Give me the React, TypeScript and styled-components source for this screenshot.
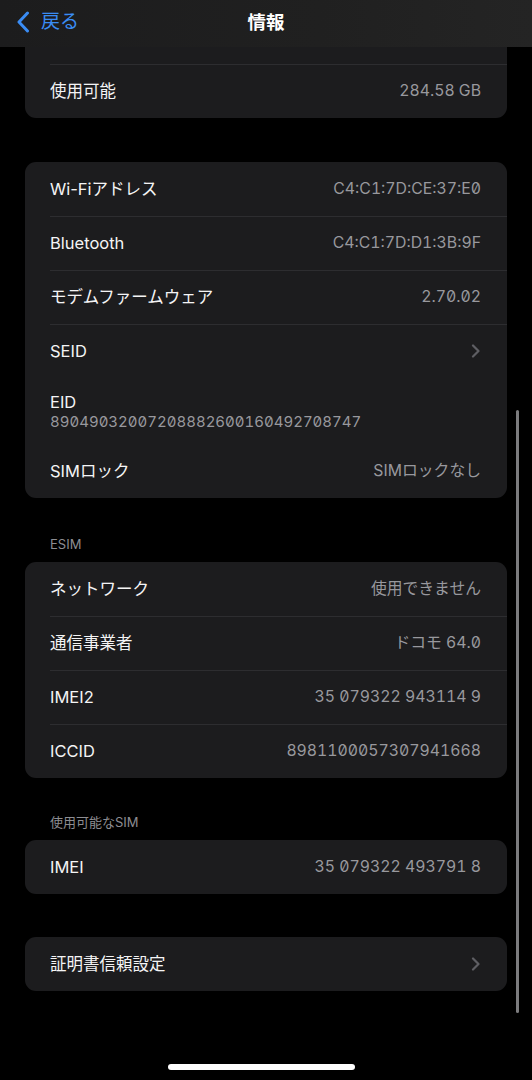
import React from 'react';
import styled, { createGlobalStyle } from 'styled-components';

const GlobalStyle = createGlobalStyle`
  html, body {
    margin: 0;
    padding: 0;
    background: #000;
  }
  body {
    font-family: Inter, "Noto Sans CJK JP", sans-serif;
    -webkit-font-smoothing: antialiased;
  }
`;

const Screen = styled.div`
  position: relative;
  width: 532px;
  height: 1080px;
  overflow: hidden;
  background: #000;
`;

const NavBar = styled.header`
  position: absolute;
  top: 0;
  left: 0;
  right: 0;
  height: 47px;
  z-index: 2;
  display: grid;
  grid-template-columns: 1fr auto 1fr;
  align-items: center;
  background: linear-gradient(90deg, #1c1c1d 0%, #202020 60%, #242424 100%);
`;

const BackButton = styled.button`
  justify-self: start;
  display: flex;
  align-items: center;
  gap: 11px;
  margin: 0 0 4px 16px;
  padding: 0;
  border: none;
  background: none;
  color: #3a8cf4;
  font-family: Inter, "Noto Sans CJK JP", sans-serif;
  font-size: 19px;
  line-height: 22px;
  cursor: pointer;
`;

const Title = styled.h1`
  margin: 0 0 4px 0;
  color: #fff;
  font-size: 18.5px;
  font-weight: 700;
  line-height: 22px;
`;

const Content = styled.main`
  display: flex;
  flex-direction: column;
  padding: 10px 25px 0 25px;
`;

const Group = styled.section<{ $gap: number }>`
  display: flex;
  flex-direction: column;
  margin-top: ${(p) => p.$gap}px;
`;

const GroupHeader = styled.div`
  padding: 0 0 9px 25px;
  color: #8d8d92;
  font-size: 13px;
  line-height: 18px;
`;

const Card = styled.div`
  display: flex;
  flex-direction: column;
  background: #1c1c1e;
  border-radius: 11px;
  overflow: hidden;
`;

const Row = styled.div<{ $stacked?: boolean }>`
  position: relative;
  display: flex;
  flex-direction: ${(p) => (p.$stacked ? 'column' : 'row')};
  align-items: ${(p) => (p.$stacked ? 'flex-start' : 'center')};
  justify-content: ${(p) => (p.$stacked ? 'center' : 'space-between')};
  height: ${(p) => (p.$stacked ? 66 : 54)}px;
  padding: 0 26px 0 25px;
  box-sizing: border-box;

  & + &::before {
    content: '';
    position: absolute;
    top: 0;
    left: 25px;
    right: 0;
    height: 1px;
    background: #2d2d30;
  }
`;

const Label = styled.span`
  color: #f4f4f5;
  font-size: 16.5px;
  line-height: 20px;
`;

const Value = styled.span<{ $small?: boolean }>`
  color: #98989d;
  font-size: ${(p) => (p.$small ? 15 : 15.8)}px;
  line-height: ${(p) => (p.$small ? 19 : 20)}px;
  font-feature-settings: 'tnum', 'zero';
  white-space: nowrap;
`;

const ScrollIndicator = styled.div`
  position: absolute;
  left: 516px;
  top: 410px;
  width: 3px;
  height: 603px;
  border-radius: 2px;
  background: #7c7c7e;
`;

const HomeIndicator = styled.div`
  position: absolute;
  left: 168px;
  bottom: 10px;
  width: 187px;
  height: 6px;
  border-radius: 3px;
  background: #fff;
`;

const Chevron = () => (
  <svg width="10" height="14" viewBox="0 0 10 14" fill="none">
    <path d="M2 1.5L7.5 7L2 12.5" stroke="#5e5e63" strokeWidth="2.2" strokeLinecap="round" strokeLinejoin="round" />
  </svg>
);

const BackChevron = () => (
  <svg width="14" height="22" viewBox="0 0 14 22" fill="none">
    <path d="M11.5 2L3 11L11.5 20" stroke="#3a8cf4" strokeWidth="3" strokeLinecap="round" strokeLinejoin="round" />
  </svg>
);

type Item = { label: string; value?: string; chevron?: boolean; stacked?: boolean };

// first row sits under the nav bar, scrolled out of view
const groups: { header?: string; gap: number; items: Item[] }[] = [
  {
    gap: 0,
    items: [
      { label: '' },
      { label: '使用可能', value: '284.58 GB' },
    ],
  },
  {
    gap: 44,
    items: [
      { label: 'Wi-Fiアドレス', value: 'C4:C1:7D:CE:37:E0' },
      { label: 'Bluetooth', value: 'C4:C1:7D:D1:3B:9F' },
      { label: 'モデムファームウェア', value: '2.70.02' },
      { label: 'SEID', chevron: true },
      { label: 'EID', value: '89049032007208882600160492708747', stacked: true },
      { label: 'SIMロック', value: 'SIMロックなし' },
    ],
  },
  {
    header: 'ESIM',
    gap: 37,
    items: [
      { label: 'ネットワーク', value: '使用できません' },
      { label: '通信事業者', value: 'ドコモ 64.0' },
      { label: 'IMEI2', value: '35 079322 943114 9' },
      { label: 'ICCID', value: '8981100057307941668' },
    ],
  },
  {
    header: '使用可能なSIM',
    gap: 35,
    items: [{ label: 'IMEI', value: '35 079322 493791 8' }],
  },
  {
    gap: 43,
    items: [{ label: '証明書信頼設定', chevron: true }],
  },
];

export default function App() {
  return (
    <Screen>
      <GlobalStyle />
      <NavBar>
        <BackButton>
          <BackChevron />
          戻る
        </BackButton>
        <Title>情報</Title>
        <span />
      </NavBar>
      <Content>
        {groups.map((group, gi) => (
          <Group key={gi} $gap={group.gap}>
            {group.header && <GroupHeader>{group.header}</GroupHeader>}
            <Card>
              {group.items.map((item, i) => (
                <Row key={i} $stacked={item.stacked}>
                  <Label>{item.label}</Label>
                  {item.value && <Value $small={item.stacked}>{item.value}</Value>}
                  {item.chevron && <Chevron />}
                </Row>
              ))}
            </Card>
          </Group>
        ))}
      </Content>
      <ScrollIndicator />
      <HomeIndicator />
    </Screen>
  );
}
